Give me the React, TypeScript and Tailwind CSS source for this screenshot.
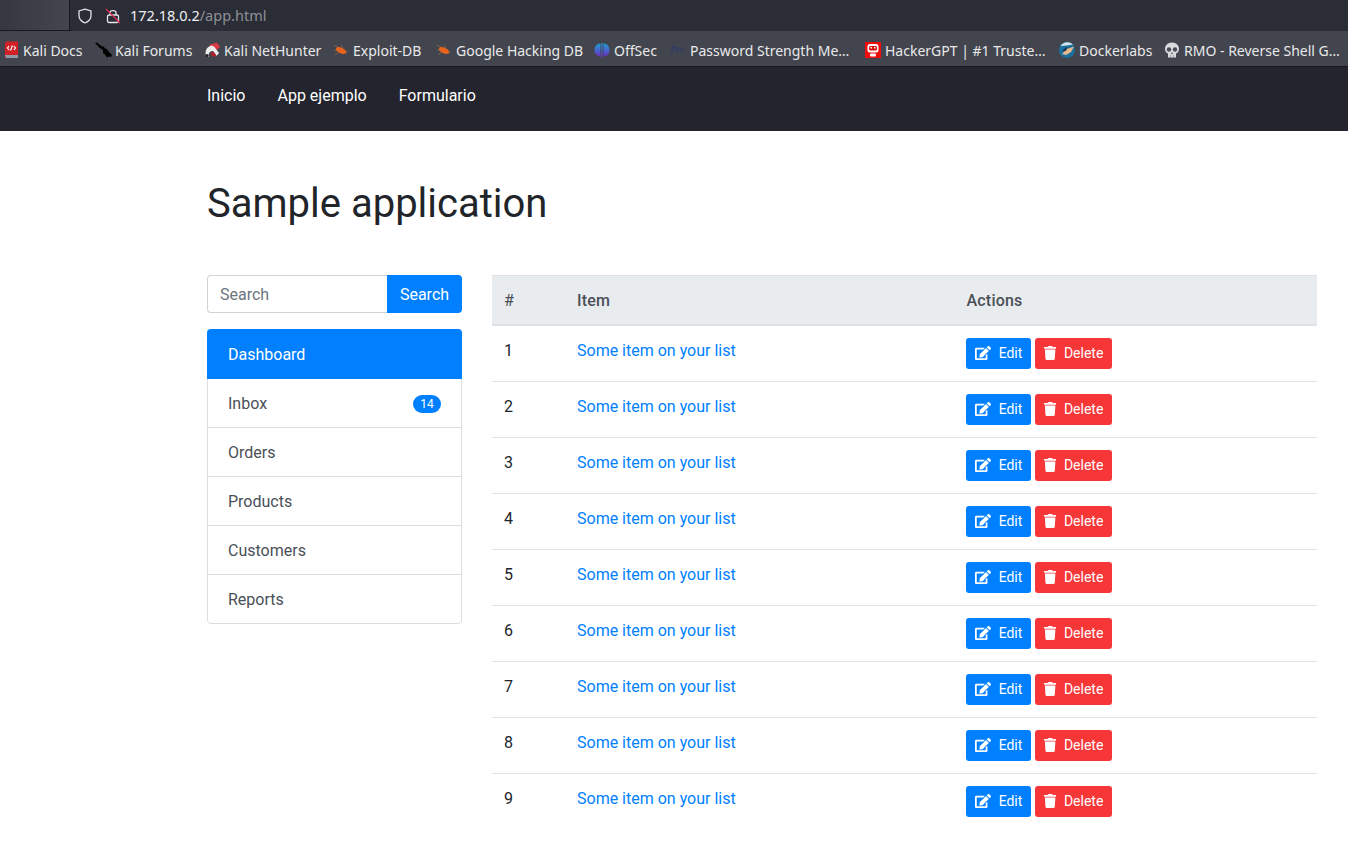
import { FaEdit, FaTrash } from "react-icons/fa";

const rows = [1, 2, 3, 4, 5, 6, 7, 8, 9];
const menu = ["Inbox", "Orders", "Products", "Customers", "Reports"];

function KaliDocs() {
  return (
    <svg width="16" height="18" viewBox="0 0 16 18">
      <path d="M2 2 L3 0.5 H15 V14 H3.5 V17 H2 Z" fill="#d31f26" />
      <path d="M2 14 H15 V17 H3 Z" fill="#8e9aa5" />
      <path d="M6 5 L4.5 7 L6 9 M11 5 L12.5 7 L11 9 M9.5 4.5 L7.5 9.5" stroke="#fff" strokeWidth="1.2" fill="none" />
    </svg>
  );
}

function KaliForums() {
  return (
    <svg width="18" height="16" viewBox="0 0 18 16">
      <path d="M0 1 L2 0.5 L5 3 L8 5 L8.5 4 L10 6.5 L12 7 L13 9 L17 13 L16 15 L14 14.5 L12 15.5 L10 12.5 L8 11 L8 8 L5 6 Z" fill="#000" />
    </svg>
  );
}

function NetHunter() {
  return (
    <svg width="16" height="16" viewBox="0 0 16 16">
      <path d="M5 3 L13 0.5 L16 5 L11 9 Z" fill="#dc3a42" />
      <path d="M8 3.5 C3 4 0.5 9 2 14 L5 15 C4 11 6 9 9 9 L12.5 14 L15 11 L10.5 5 Z" fill="#ececec" />
      <path d="M6 12 L9.5 9.5 L12.5 13.5 L10 15 Z" fill="#b3202a" />
      <circle cx="3" cy="13.5" r="1.6" fill="#222" />
    </svg>
  );
}

function Bug() {
  return (
    <svg width="16" height="16" viewBox="0 0 16 16">
      <path d="M1 3 L6 6 M2 13 L6 10 M14 12 L10 9 M8 3 L10 6 M1 8 H5 M11 11 L15 9" stroke="#8a6a4a" strokeWidth="0.8" />
      <ellipse cx="8" cy="8.5" rx="5.5" ry="2.8" transform="rotate(25 8 8.5)" fill="#e8641e" />
    </svg>
  );
}

function OffSec() {
  return (
    <svg width="16" height="16" viewBox="0 0 16 16">
      <defs>
        <linearGradient id="off" x1="0" y1="0" x2="0" y2="1">
          <stop offset="0" stopColor="#1f9ed8" />
          <stop offset="1" stopColor="#6a2fc0" />
        </linearGradient>
      </defs>
      <path d="M6.5 1.5 C2 2 0.5 5 0.5 8 C0.5 11 2 14 6.5 14.5 Z" fill="url(#off)" />
      <path d="M9.5 1.5 C14 2 15.5 5 15.5 8 C15.5 11 14 14 9.5 14.5 Z" fill="url(#off)" />
      <rect x="7.4" y="1" width="1.2" height="15" fill="url(#off)" />
    </svg>
  );
}

function Pm() {
  return (
    <svg width="16" height="16" viewBox="0 0 16 16">
      <path d="M2 11 V5 H5 V8 H2 M7 11 V5 L9.5 8 L12 5 V11" stroke="#2c3a6e" strokeWidth="1" fill="none" />
    </svg>
  );
}

function HackerBot() {
  return (
    <svg width="16" height="16" viewBox="0 0 16 16">
      <rect width="16" height="16" fill="#f20d0d" />
      <rect x="2.5" y="2" width="11" height="8.5" rx="2.5" fill="#fff" />
      <rect x="4" y="4" width="8" height="4.5" rx="1.5" fill="#d80f0f" />
      <rect x="5.5" y="5" width="1.5" height="1.5" fill="#fff" />
      <rect x="9" y="5" width="1.5" height="1.5" fill="#fff" />
      <rect x="5" y="11.5" width="6" height="3" rx="1" fill="#fff" />
    </svg>
  );
}

function Docker() {
  return (
    <svg width="16" height="16" viewBox="0 0 16 16">
      <circle cx="8" cy="8" r="8" fill="#1b6f9c" />
      <path d="M1.5 4 A8 8 0 0 1 14 2.5 L8 3.5 Z" fill="#cfe4ef" />
      <path d="M3 12 L8 7 L15 4.5 L12 10 L7 13 Z" fill="#e9b98c" />
      <path d="M3 9 L8 4.5 L7 9 Z" fill="#16324a" />
    </svg>
  );
}

function Skull() {
  return (
    <svg width="16" height="16" viewBox="0 0 16 16">
      <path d="M8 0.5 C3.5 0.5 1 3.5 1 7 C1 9.5 2.5 11 4 11.5 V15.5 H12 V11.5 C13.5 11 15 9.5 15 7 C15 3.5 12.5 0.5 8 0.5 Z" fill="#d9dadd" />
      <circle cx="5" cy="7.5" r="2.2" fill="#4a4d55" />
      <circle cx="11" cy="7.5" r="2.2" fill="#4a4d55" />
      <path d="M8 10 L7 12 H9 Z" fill="#4a4d55" />
      <path d="M6.5 13 V15.5 M9.5 13 V15.5" stroke="#8a8c92" strokeWidth="0.7" />
    </svg>
  );
}

const bookmarks = [
  { icon: <KaliDocs />, label: "Kali Docs", w: "w-[92px]", gap: "gap-[3px]" },
  { icon: <KaliForums />, label: "Kali Forums", w: "w-[109px]", gap: "gap-[1px]" },
  { icon: <NetHunter />, label: "Kali NetHunter", w: "w-[129px]", gap: "gap-[3px]" },
  { icon: <Bug />, label: "Exploit-DB", w: "w-[103px]", gap: "gap-[3px]" },
  { icon: <Bug />, label: "Google Hacking DB", w: "w-[158px]", gap: "gap-[3px]" },
  { icon: <OffSec />, label: "OffSec", w: "w-[76px]", gap: "gap-[3px]" },
  { icon: <Pm />, label: "Password Strength Me…", w: "w-[195px]", gap: "gap-[3px]" },
  { icon: <HackerBot />, label: "HackerGPT | #1 Truste…", w: "w-[194px]", gap: "gap-[3px]" },
  { icon: <Docker />, label: "Dockerlabs", w: "w-[105px]", gap: "gap-[3px]" },
  { icon: <Skull />, label: "RMO - Reverse Shell G…", w: "w-[184px]", gap: "gap-[3px]" },
];

export default function App() {
  return (
    <div className="h-[864px] overflow-hidden bg-white font-['Roboto',sans-serif] text-[16px] text-[#212529]">
      {/* BROWSER BAR */}
      <div className="flex h-[31px] border-b border-[#17181c] bg-[#2b2a33]">
        <div className="h-full w-[69px] bg-gradient-to-r from-[#363840] to-[#43464d]" />
        <div className="flex h-[31px] flex-1 items-center rounded-bl-[3px] border-l border-[#17181c] bg-[#2a2c36] pl-[7px] font-['Noto_Sans',sans-serif] text-[14.5px] text-[#f0f0f2]">
          <svg width="16" height="16" viewBox="0 0 16 16" fill="none" stroke="#e4e4e8" strokeWidth="1.3">
            <path d="M8 1.2 L14 3 V7.5 C14 11 11.5 13.6 8 15 C4.5 13.6 2 11 2 7.5 V3 Z" />
          </svg>
          <svg className="ml-[12px]" width="16" height="16" viewBox="0 0 16 16" fill="none">
            <rect x="2.5" y="7" width="11" height="7.5" rx="1.5" stroke="#e8e8ec" strokeWidth="1.3" />
            <path d="M5 7 V4.5 C5 2 11 2 11 4.5 V7" stroke="#e8e8ec" strokeWidth="1.3" />
            <path d="M1 1 L15 15" stroke="#e22850" strokeWidth="1.3" />
          </svg>
          <span className="ml-[9px]">172.18.0.2<span className="text-[#8f9096]">/app.html</span></span>
        </div>
      </div>

      {/* BOOKMARKS */}
      <div className="flex h-[36px] items-center border-b border-[#17181c] bg-[#42454d] pt-[3px] pl-[3px] font-['Noto_Sans',sans-serif] text-[14px] whitespace-nowrap text-[#e9e9eb]">
        {bookmarks.map((b) => (
          <div key={b.label} className={"flex shrink-0 items-center " + b.gap + " " + b.w}>
            <span className="shrink-0">{b.icon}</span>
            <span className="ml-[1px]">{b.label}</span>
          </div>
        ))}
      </div>

      {/* NAVBAR */}
      <nav className="flex h-[64px] items-start gap-[32px] bg-[#23242d] pt-[17px] pl-[207px] text-white">
        <a>Inicio</a>
        <a>App ejemplo</a>
        <a>Formulario</a>
      </nav>

      <main className="pl-[207px]">
        <h1 className="mt-[49px] text-[40px] leading-[48px] font-normal">Sample application</h1>

        <div className="mt-[47px] flex items-start">
          {/* SIDEBAR */}
          <aside className="w-[255px] shrink-0">
            <div className="flex h-[38px]">
              <div className="flex flex-1 items-center rounded-l-[4px] border border-r-0 border-[#ced4da] pt-[2px] pl-[12px] text-[#6c757d]">Search</div>
              <button className="w-[75px] rounded-r-[4px] bg-[#007fff] pt-[2px] text-white">Search</button>
            </div>

            <div className="mt-[16px] overflow-hidden rounded-[4px]">
              <div className="flex h-[50px] items-center bg-[#007fff] px-[21px] pt-[2px] text-white">Dashboard</div>
              <div className="rounded-b-[4px] border border-t-0 border-[#dcdee1]">
                {menu.map((m) => (
                  <div key={m} className="flex h-[49px] items-center justify-between border-b border-[#dcdee1] px-[20px] pt-[2px] text-[#495057] last:h-[48px] last:border-b-0 last:pt-[1px]">
                    <span>{m}</span>
                    {m === "Inbox" && (
                      <span className="flex h-[18px] w-[28px] items-center justify-center rounded-full bg-[#007fff] text-[12px] text-white">14</span>
                    )}
                  </div>
                ))}
              </div>
            </div>
          </aside>

          {/* TABLE */}
          <div className="ml-[30px] w-[825px]">
            <div className="flex h-[51px] items-center border-y border-y-[#dee2e6] border-b-2 bg-[#e9ecef] pt-[2px] text-[#495057]">
              <div className="w-[85px] pl-[12px]">#</div>
              <div className="w-[389.5px] font-medium tracking-[0.2px]">Item</div>
              <div className="font-medium tracking-[0.2px]">Actions</div>
            </div>
            {rows.map((n) => (
              <div key={n} className="flex h-[56px] items-start border-b border-[#dee2e6] pt-[13px] last:border-b-0">
                <div className="w-[85px] pl-[12px]">{n}</div>
                <a className="w-[389px] text-[#007fff]">Some item on your list</a>
                <div className="-mt-[1px] flex gap-[4px]">
                  <button className="flex h-[31px] w-[65px] items-center justify-center gap-[8px] rounded-[3px] bg-[#007fff] text-[14px] text-white">
                    <FaEdit className="-mt-[2px] h-[16px] w-[16px]" />
                    Edit
                  </button>
                  <button className="flex h-[31px] w-[77px] items-center justify-center gap-[8px] rounded-[3px] bg-[#f73737] text-[14px] text-white">
                    <FaTrash className="-mt-[2px] h-[14px] w-[12.25px]" />
                    Delete
                  </button>
                </div>
              </div>
            ))}
          </div>
        </div>
      </main>
    </div>
  );
}
